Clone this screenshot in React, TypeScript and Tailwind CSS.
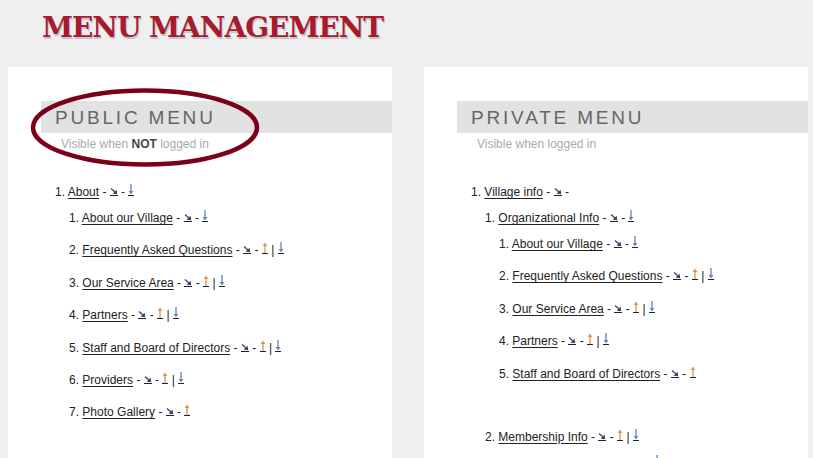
import React from 'react';

type Move = 'in' | 'up' | 'down';

interface MenuItem {
  label: string;
  moves: Move[][];
  children?: MenuItem[];
}

const publicMenu: MenuItem[] = [
  {
    label: 'About',
    moves: [['in'], ['down']],
    children: [
      { label: 'About our Village', moves: [['in'], ['down']] },
      { label: 'Frequently Asked Questions', moves: [['in'], ['up', 'down']] },
      { label: 'Our Service Area', moves: [['in'], ['up', 'down']] },
      { label: 'Partners', moves: [['in'], ['up', 'down']] },
      { label: 'Staff and Board of Directors', moves: [['in'], ['up', 'down']] },
      { label: 'Providers', moves: [['in'], ['up', 'down']] },
      { label: 'Photo Gallery', moves: [['in'], ['up']] },
    ],
  },
];

const privateMenu: MenuItem[] = [
  {
    label: 'Village info',
    moves: [['in'], []],
    children: [
      {
        label: 'Organizational Info',
        moves: [['in'], ['down']],
        children: [
          { label: 'About our Village', moves: [['in'], ['down']] },
          { label: 'Frequently Asked Questions', moves: [['in'], ['up', 'down']] },
          { label: 'Our Service Area', moves: [['in'], ['up', 'down']] },
          { label: 'Partners', moves: [['in'], ['up', 'down']] },
          { label: 'Staff and Board of Directors', moves: [['in'], ['up']] },
        ],
      },
      {
        label: 'Membership Info',
        moves: [['in'], ['up', 'down']],
        children: [{ label: 'Membership Benefits', moves: [['in'], ['down']] }],
      },
    ],
  },
];

function MoveIcon({ kind }: { kind: Move }) {
  if (kind === 'in') {
    return (
      <span className="inline-block border-b border-[#222] align-baseline leading-none">
        <svg width="8" height="10" viewBox="0 0 8 10" className="block">
          <path d="M1 3.5 L5.5 7.5" stroke="#34466a" strokeWidth="1.3" fill="none" />
          <path d="M7.2 9.2 L2.6 8.7 L6.7 4.8 Z" fill="#34466a" />
        </svg>
      </span>
    );
  }
  const up = kind === 'up';
  return (
    <span className="inline-block border-b border-[#222] align-baseline leading-none">
      <svg width="6" height="11" viewBox="0 0 6 11" className="block">
        {up ? (
          <>
            <path d="M3 2 L3 11" stroke="#d89452" strokeWidth="1.3" />
            <path d="M0.6 4 L3 0.5 L5.4 4 Z" fill="#d89452" />
          </>
        ) : (
          <>
            <path d="M3 0 L3 9" stroke="#5f86ba" strokeWidth="1.3" />
            <path d="M0.6 7 L3 10.5 L5.4 7 Z" fill="#5f86ba" />
          </>
        )}
      </svg>
    </span>
  );
}

function MenuRow({ item, n }: { item: MenuItem; n: number }) {
  const [first, second] = item.moves;
  return (
    <div className="leading-[16px] whitespace-nowrap">
      {n}. <a className="underline decoration-[#222] underline-offset-2">{item.label}</a> -{' '}
      {first.map((m, i) => (
        <MoveIcon key={i} kind={m} />
      ))}{' '}
      -{' '}
      {second.map((m, i) => (
        <React.Fragment key={i}>
          {i > 0 && ' | '}
          <MoveIcon kind={m} />
        </React.Fragment>
      ))}
    </div>
  );
}

function MenuList({ items, nested }: { items: MenuItem[]; nested?: boolean }) {
  return (
    <ol className={nested ? 'mt-[10px] mb-[31px] flex flex-col gap-[16.4px] pl-[14px]' : 'flex flex-col'}>
      {items.map((item, i) => (
        <li key={item.label}>
          <MenuRow item={item} n={i + 1} />
          {item.children && <MenuList items={item.children} nested />}
        </li>
      ))}
    </ol>
  );
}

function MenuPanel({ title, note, items }: { title: string; note: React.ReactNode; items: MenuItem[] }) {
  return (
    <section className="w-[384px] shrink-0 bg-white pt-[34px]">
      <div className="ml-[33px] h-[32px] bg-[#e2e2e2] pl-[14px] flex items-center">
        <h2 className="text-[19px] tracking-[2.8px] text-[#666] leading-none pt-[1px]">{title}</h2>
      </div>
      <p className="ml-[53px] mt-[4px] text-[12px] leading-[14px] text-[#aaa]">{note}</p>
      <div className="pl-[47px] mt-[33px] text-[12px] text-[#222]">
        <MenuList items={items} />
      </div>
    </section>
  );
}

export default function App() {
  return (
    <div
      className="relative h-[458px] w-full overflow-hidden bg-[#efefef]"
      style={{ fontFamily: '"Liberation Sans", Arial, sans-serif' }}
    >
      <h1
        className="pl-[42px] pt-[11px] h-[67px] text-[28px] leading-[34px] tracking-[-1px] font-bold text-[#a81a2c] [text-shadow:1px_2px_0_#c4c4d2]"
        style={{ fontFamily: '"DejaVu Serif", serif' }}
      >
        MENU MANAGEMENT
      </h1>

      <div className="flex gap-[32px] pl-[8px] h-[391px]">
        <MenuPanel
          title="PUBLIC MENU"
          note={
            <>
              Visible when <b className="text-[#444]">NOT</b> logged in
            </>
          }
          items={publicMenu}
        />
        <MenuPanel title="PRIVATE MENU" note="Visible when logged in" items={privateMenu} />
      </div>

      {/* hand-drawn circle around the public menu heading */}
      <svg className="absolute left-[29px] top-[87px]" width="236" height="84" viewBox="0 0 236 84">
        <ellipse cx="116" cy="40.5" rx="112" ry="37" fill="none" stroke="#7c0018" strokeWidth="4.5" />
      </svg>
    </div>
  );
}
